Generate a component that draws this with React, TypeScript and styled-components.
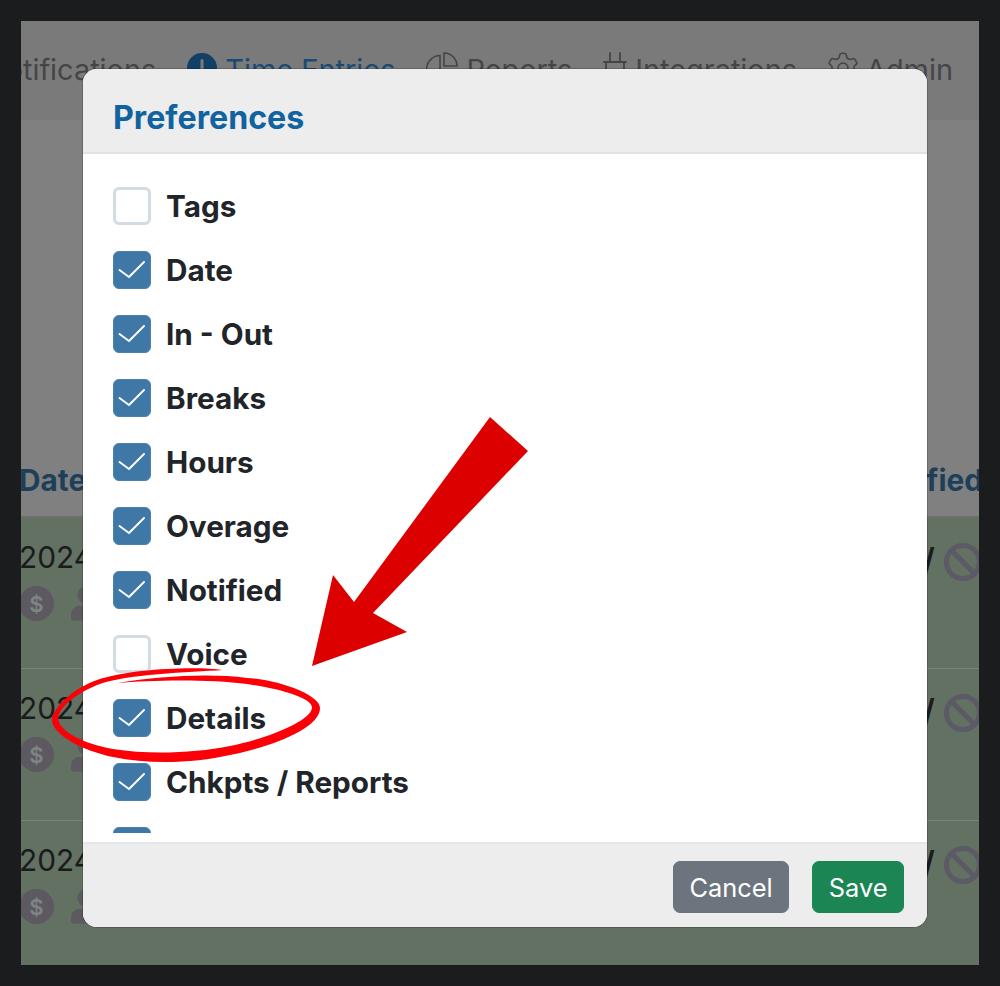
import React from "react";
import styled, { createGlobalStyle } from "styled-components";
import { FaUser } from "react-icons/fa";

const Global = createGlobalStyle`
  html, body { margin: 0; padding: 0; background: #1b1c1e; }
  * { box-sizing: border-box; }
  body { font-family: Inter, "Liberation Sans", sans-serif; }
`;

const Frame = styled.div`
  width: 1000px;
  height: 986px;
  padding: 21px;
  background: #1b1c1e;
`;
const Screen = styled.div`
  position: relative;
  width: 958px;
  height: 944px;
  overflow: hidden;
  display: flex;
  flex-direction: column;
  background: #808080;
`;
const Nav = styled.nav`
  height: 99px;
  flex: none;
  display: flex;
  justify-content: flex-end;
  align-items: flex-start;
  padding: 29px 26px 0 0;
  gap: 31px;
  background: #7a7a7a;
  overflow: hidden;
  white-space: nowrap;
`;
const NavItem = styled.div<{ $active?: boolean }>`
  display: flex;
  align-items: center;
  gap: 8px;
  height: 38px;
  font-size: 28.9px;
  color: ${(p) => (p.$active ? "#1a4a73" : "#444548")};
  flex: none;
  & > svg { margin-top: -2px; }
`;
const Spacer = styled.div`
  height: 325px;
  flex: none;
`;
const TableHead = styled.div`
  height: 73px;
  flex: none;
  display: flex;
  justify-content: space-between;
  padding-top: 17px;
  border-bottom: 2px solid #6f6f6f;
  font-size: 29.8px;
  font-weight: 700;
  color: #1d3f5a;
  white-space: nowrap;
`;
const HeadLeft = styled.span`
  margin-left: -2px;
`;
const HeadRight = styled.span`
  margin-right: -4px;
`;
const Row = styled.div<{ $height: number }>`
  height: ${(p) => p.$height}px;
  flex: none;
  display: flex;
  justify-content: space-between;
  background: #627161;
  border-bottom: 1px solid #77837a;
  overflow: hidden;
  &:last-of-type { border-bottom: none; }
`;
const DateCell = styled.div`
  display: flex;
  flex-direction: column;
  padding-top: 22px;
  gap: 12px;
  margin-left: -2px;
`;
const DateText = styled.div`
  font-size: 29.8px;
  line-height: 34px;
  color: #1a1b1c;
`;
const RowIcons = styled.div`
  display: flex;
  align-items: center;
  gap: 17px;
`;
const Dollar = styled.span`
  width: 35px;
  height: 35px;
  border-radius: 50%;
  background: #5c5a60;
  color: #7f8583;
  display: flex;
  align-items: center;
  justify-content: center;
  font-size: 22px;
  font-weight: 600;
`;
const UserIcon = styled(FaUser)`
  width: 30px;
  height: 35px;
  color: #5c5a60;
`;
const StatusCell = styled.div`
  display: flex;
  align-items: flex-start;
  gap: 9px;
  padding-top: 25px;
  margin-right: -3px;
`;
const Slash = styled.span`
  font-size: 38px;
  font-weight: 500;
  line-height: 38px;
  color: #1a1b1c;
`;
const BanIcon = styled.svg`
  width: 38px;
  height: 38px;
  display: block;
  color: #5b5a66;
`;

const Modal = styled.div`
  position: absolute;
  left: 62px;
  top: 48px;
  width: 844px;
  height: 858px;
  display: flex;
  flex-direction: column;
  background: #fff;
  border-radius: 14px;
  overflow: hidden;
  box-shadow: 0 0 0 1px rgba(0, 0, 0, 0.18);
`;
const ModalHeader = styled.header`
  height: 85px;
  flex: none;
  display: flex;
  align-items: center;
  padding: 13px 30px 0;
  background: #ededed;
  border-bottom: 2px solid #dfe3e8;
`;
const Title = styled.h5`
  margin: 0;
  font-size: 32.2px;
  font-weight: 700;
  color: #11639f;
`;
const ModalBody = styled.div`
  flex: 1;
  min-height: 0;
  padding: 33px 30px 9px;
  display: flex;
`;
const List = styled.div`
  flex: 1;
  min-height: 0;
  overflow: hidden;
  display: flex;
  flex-direction: column;
  gap: 26px;
`;
const Item = styled.label`
  display: flex;
  align-items: center;
  gap: 15px;
  height: 38px;
  flex: none;
  font-size: 29.7px;
  font-weight: 700;
  color: #212529;
`;
const Box = styled.span<{ $checked: boolean }>`
  width: 38px;
  height: 38px;
  flex: none;
  display: block;
  border-radius: 6px;
  background: ${(p) => (p.$checked ? "#3f78a7" : "#fff")};
  border: ${(p) => (p.$checked ? "1px solid #4a81ae" : "3px solid #d3dbe3")};
`;
const Tick = styled.svg`
  display: block;
  width: 36px;
  height: 36px;
`;
const ModalFooter = styled.footer`
  height: 85px;
  flex: none;
  display: flex;
  justify-content: flex-end;
  align-items: flex-start;
  gap: 23px;
  padding: 17px 23px 0 0;
  background: #ededed;
  border-top: 2px solid #e3e6ea;
`;
const Button = styled.button<{ $bg: string }>`
  height: 52px;
  padding: 0 15.5px;
  border: 1px solid ${(p) => p.$bg};
  border-radius: 7px;
  background: ${(p) => p.$bg};
  color: #fff;
  font-family: inherit;
  font-size: 25.4px;
  font-weight: 400;
`;
const Overlay = styled.svg`
  position: absolute;
  left: -21px;
  top: -21px;
  width: 1000px;
  height: 986px;
  pointer-events: none;
`;

const items: [string, boolean][] = [
  ["Tags", false],
  ["Date", true],
  ["In - Out", true],
  ["Breaks", true],
  ["Hours", true],
  ["Overage", true],
  ["Notified", true],
  ["Voice", false],
  ["Details", true],
  ["Chkpts / Reports", true],
  ["", true],
];

const ClockIcon = () => (
  <svg width="30" height="30" viewBox="0 0 30 30">
    <circle cx="15" cy="15" r="15" fill="#123f66" />
    <rect x="13.5" y="6" width="3" height="11" rx="1.5" fill="#7a7a7a" />
  </svg>
);
const PieIcon = () => (
  <svg width="32" height="32" viewBox="0 0 32 32" fill="none" stroke="#444548" strokeWidth="1.6">
    <path d="M14 3.5 A14 14 0 1 0 28.5 18 H14 Z" />
    <path d="M18 1 A13 13 0 0 1 31 14 H18 Z" />
  </svg>
);
const PlugIcon = () => (
  <svg width="24" height="32" viewBox="0 0 24 32" fill="none" stroke="#444548" strokeWidth="1.8" strokeLinecap="round">
    <path d="M7 1 V10 M17 1 V10" />
    <path d="M1 10 H23 M3 10 V19 A9 9 0 0 0 21 19 V10 M12 28 V32" />
  </svg>
);
const GearIcon = () => (
  <svg width="30" height="32" viewBox="0 0 30 32" fill="none" stroke="#444548" strokeWidth="1.6" strokeLinejoin="round">
    <path d="M12 2 C13 1 17 1 18 2 L19 6 C20 6.5 21 7 22 7.6 L26 6.5 C27 7 29 10.5 28.8 11.6 L26 14.5 V17.5 L28.8 20.4 C29 21.5 27 25 26 25.5 L22 24.4 C21 25 20 25.5 19 26 L18 30 C17 31 13 31 12 30 L11 26 C10 25.5 9 25 8 24.4 L4 25.5 C3 25 1 21.5 1.2 20.4 L4 17.5 V14.5 L1.2 11.6 C1 10.5 3 7 4 6.5 L8 7.6 C9 7 10 6.5 11 6 Z" />
    <circle cx="15" cy="16" r="5" />
  </svg>
);

const DataRow = ({ height }: { height: number }) => (
  <Row $height={height}>
    <DateCell>
      <DateText>2024</DateText>
      <RowIcons>
        <Dollar>$</Dollar>
        <UserIcon />
      </RowIcons>
    </DateCell>
    <StatusCell>
      <Slash>/</Slash>
      <BanIcon viewBox="0 0 38 38" fill="none" stroke="currentColor" strokeWidth="5">
        <circle cx="19" cy="19" r="16.5" />
        <path d="M7.5 7.5 L30.5 30.5" />
      </BanIcon>
    </StatusCell>
  </Row>
);

export default function App() {
  return (
    <Frame>
      <Global />
      <Screen>
        <Nav>
          <NavItem>Notifications</NavItem>
          <NavItem $active>
            <ClockIcon />
            Time Entries
          </NavItem>
          <NavItem>
            <PieIcon />
            Reports
          </NavItem>
          <NavItem>
            <PlugIcon />
            Integrations
          </NavItem>
          <NavItem>
            <GearIcon />
            Admin
          </NavItem>
        </Nav>
        <Spacer />
        <TableHead>
          <HeadLeft>Date</HeadLeft>
          <HeadRight>Notified</HeadRight>
        </TableHead>
        <DataRow height={151} />
        <DataRow height={152} />
        <DataRow height={145} />
        <Modal>
          <ModalHeader>
            <Title>Preferences</Title>
          </ModalHeader>
          <ModalBody>
            <List>
              {items.map(([label, checked], i) => (
                <Item key={i}>
                  <Box $checked={checked}>
                    {checked && (
                      <Tick viewBox="0 0 36 36" fill="none" stroke="#fff" strokeWidth="2" strokeLinecap="round" strokeLinejoin="round">
                        <path d="M5.5 18 L15 25 L30 10" />
                      </Tick>
                    )}
                  </Box>
                  {label}
                </Item>
              ))}
            </List>
          </ModalBody>
          <ModalFooter>
            <Button $bg="#6c757d">Cancel</Button>
            <Button $bg="#1b8654">Save</Button>
          </ModalFooter>
        </Modal>
        <Overlay viewBox="0 0 1000 986">
          <polygon fill="#dd0000" points="490,417 528,451 373,613 407,632 312,666 333,575 354,602" />
          <path
            fill="#fb0007"
            d="M223 670 C200 666 130 668 97 680 C75 688 57 703 52 718 C50 733 80 750 113 757 C150 765 195 763 230 755 C270 747 320 729 320 708 C320 695 280 680 247 678 C210 673 160 676 118 683 C150 680 210 679 247 684 C280 689 313 698 312 708 C310 722 265 739 230 746 C195 753 150 755 113 749 C85 744 59 732 58 718 C60 705 80 692 97 685 C125 674 190 672 223 670 Z"
          />
        </Overlay>
      </Screen>
    </Frame>
  );
}
